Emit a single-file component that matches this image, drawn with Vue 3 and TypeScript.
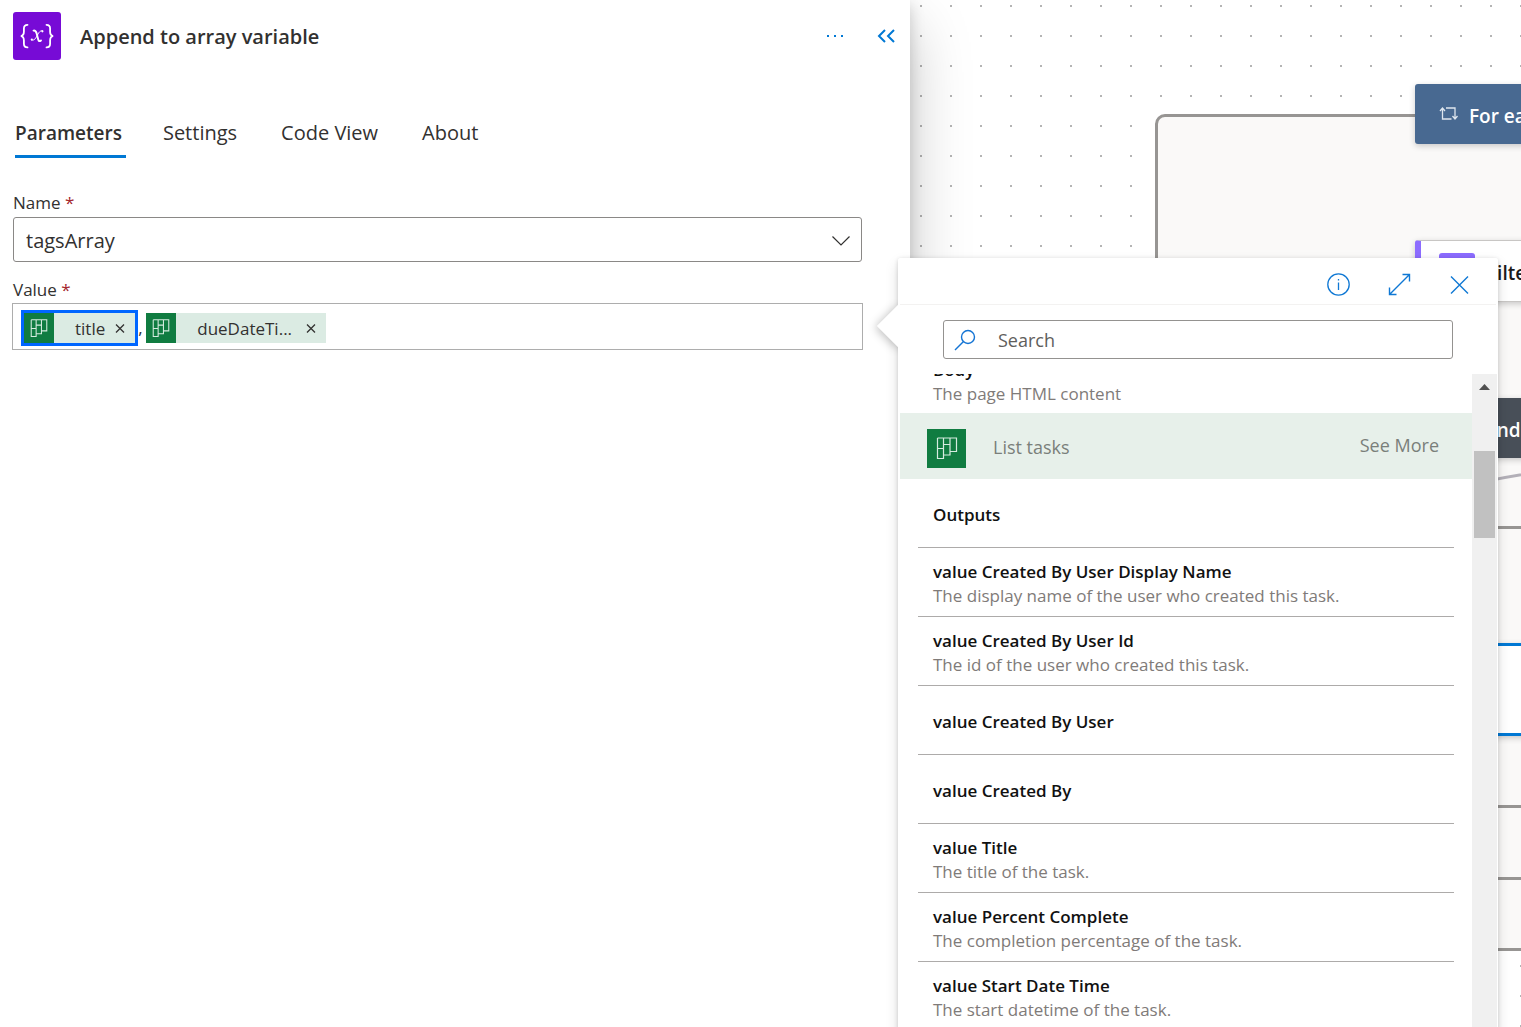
<script setup lang="ts">
import { ref } from 'vue'

interface OutputItem {
  title: string
  description?: string
}

const tabs: string[] = ['Parameters', 'Settings', 'Code View', 'About']
const activeTab = ref<string>('Parameters')
const variableName = ref<string>('tagsArray')
const query = ref<string>('')

const outputs: OutputItem[] = [
  { title: 'value Created By User Display Name', description: 'The display name of the user who created this task.' },
  { title: 'value Created By User Id', description: 'The id of the user who created this task.' },
  { title: 'value Created By User' },
  { title: 'value Created By' },
  { title: 'value Title', description: 'The title of the task.' },
  { title: 'value Percent Complete', description: 'The completion percentage of the task.' },
  { title: 'value Start Date Time', description: 'The start datetime of the task.' },
]
</script>

<template>
  <div class="designer">
    <section class="panel">
      <header class="panel-header">
        <svg class="variable-icon" viewBox="0 0 48 48" aria-hidden="true">
          <rect width="48" height="48" rx="3" fill="#770bd6" />
          <g fill="none" stroke="#fff" stroke-linecap="round">
            <path stroke-width="1.8" d="M14.5 12.8c-3 0-3.6 1.4-3.6 3.6v3.4c0 2.6-.7 3.900-3 4.300 2.300.4 3 1.700 3 4.300v3.400c0 2.200.6 3.600 3.600 3.600" />
            <path stroke-width="1.8" d="M33.5 12.8c3 0 3.6 1.4 3.6 3.6v3.4c0 2.6.7 3.900 3 4.300-2.300.4-3 1.700-3 4.300v3.400c0 2.200-.6 3.600-3.600 3.600" />
            <path stroke-width="1.9" d="M20.500 18.600c2.800-.6 3.100 2.400 3.900 5.800s1.200 6 3.600 4" />
            <path stroke-width="1" d="M29.600 18.900c-2.200-.8-3.600 1.300-5.200 4.200s-2.900 6-5.800 4.800" />
          </g>
          <circle cx="29.400" cy="19.300" r="1.100" fill="#fff" />
          <circle cx="18.800" cy="27.600" r="1.100" fill="#fff" />
        </svg>
        <h1 class="panel-title">Append to array variable</h1>
        <button class="icon-button" type="button" aria-label="More commands">
          <svg width="20" height="20" viewBox="0 0 20 20" fill="#0078d4">
            <rect x="3" y="9" width="2" height="2" /><rect x="10" y="9" width="2" height="2" /><rect x="17" y="9" width="2" height="2" />
          </svg>
        </button>
        <button class="icon-button" type="button" aria-label="Collapse panel">
          <svg width="20" height="20" viewBox="0 0 20 20" fill="none" stroke="#0078d4" stroke-width="2">
            <path d="M9 4L3 10l6 6M18 4l-6 6 6 6" />
          </svg>
        </button>
      </header>

      <nav class="tabs" role="tablist">
        <button
          v-for="tab in tabs"
          :key="tab"
          class="tab"
          :class="{ active: tab === activeTab }"
          type="button"
          role="tab"
          :aria-selected="tab === activeTab"
          @click="activeTab = tab"
        >{{ tab }}</button>
      </nav>

      <form class="fields" @submit.prevent>
        <label class="field-label" for="variable-name">Name <span class="required">*</span></label>
        <div class="select-wrap">
          <select id="variable-name" v-model="variableName" class="select">
            <option>tagsArray</option>
          </select>
          <svg class="chevron" width="20" height="12" viewBox="0 0 20 12" fill="none" stroke="#323130" stroke-width="1.200">
            <path d="M1.500 1.500L10 10l8.500-8.500" />
          </svg>
        </div>
        <span id="value-label" class="field-label">Value <span class="required">*</span></span>
        <div class="value-box" role="textbox" aria-labelledby="value-label" tabindex="0">
          <span class="token selected">
            <span class="token-icon">
              <svg width="18" height="18" viewBox="0 0 22 22" fill="none" stroke="#d5ebdf" stroke-width="1.300">
                <path d="M1.500 1h19v13.500H14M1.500 1v20.500h6V1M1.500 11.500h6M7.500 7.500H14M14 1v17H7.500" />
              </svg>
            </span>
            <span class="token-text">title</span>
            <button class="token-remove" type="button" aria-label="Remove title">
              <svg width="10" height="10" viewBox="0 0 10 10" stroke="#323130" stroke-width="1.300"><path d="M1 1.500l8 8M9 1.500l-8 8" /></svg>
            </button>
          </span>
          <span class="comma">,</span>
          <span class="token">
            <span class="token-icon">
              <svg width="18" height="18" viewBox="0 0 22 22" fill="none" stroke="#d5ebdf" stroke-width="1.300">
                <path d="M1.500 1h19v13.500H14M1.500 1v20.500h6V1M1.500 11.500h6M7.500 7.500H14M14 1v17H7.500" />
              </svg>
            </span>
            <span class="token-text">dueDateTi...</span>
            <button class="token-remove wide" type="button" aria-label="Remove dueDateTime">
              <svg width="10" height="10" viewBox="0 0 10 10" stroke="#323130" stroke-width="1.300"><path d="M1 1.500l8 8M9 1.500l-8 8" /></svg>
            </button>
          </span>
        </div>
      </form>
    </section>

    <main class="canvas">
      <div class="group outer"></div>
      <div class="group inner-a"></div>
      <div class="group inner-b"></div>
      <svg class="edge" width="120" height="30" viewBox="0 0 120 30" fill="none" stroke="#b3b0b8" stroke-width="3">
        <path d="M0 29C30 20 60 13 120 5" />
      </svg>
      <div class="node for-each">
        <svg width="20" height="16" viewBox="0 0 20 16" fill="none" stroke="#dfe6ee" stroke-width="1.300">
          <path d="M1 5l2.500-3L6 5M3.500 2.500v10.500h9M7 2h9v10.500M13.500 10l2.500 3 2.500-3" />
        </svg>
        <span>For each</span>
      </div>
      <div class="node filter">
        <span class="filter-icon"></span>
        <span>Filter array</span>
      </div>
      <div class="node condition"><span>Condition</span></div>
      <div class="node selected-card"></div>
    </main>

    <aside class="picker">
      <div class="beak"></div>
      <div class="picker-body">
        <header class="picker-header">
          <button class="icon-button" type="button" aria-label="Information">
            <svg width="24" height="24" viewBox="0 0 24 24" fill="none" stroke="#0f78d4" stroke-width="1.300">
              <circle cx="11.500" cy="11.500" r="10.700" /><path d="M11.500 9.500V17M11.500 6v1.600" />
            </svg>
          </button>
          <button class="icon-button" type="button" aria-label="Expand">
            <svg width="24" height="24" viewBox="0 0 24 24" fill="none" stroke="#0f78d4" stroke-width="1.400">
              <path d="M2.500 21.500l20-20M15.500 1.500h7v7M2.500 14.500v7h7" />
            </svg>
          </button>
          <button class="icon-button" type="button" aria-label="Close">
            <svg width="24" height="24" viewBox="0 0 24 24" fill="none" stroke="#0f78d4" stroke-width="1.400">
              <path d="M4 3.500l17 17M21 3.500l-17 17" />
            </svg>
          </button>
        </header>

        <label class="search">
          <svg width="22" height="22" viewBox="0 0 22 22" fill="none" stroke="#1474d4" stroke-width="1.400">
            <circle cx="14" cy="8" r="6.500" /><path d="M9.500 12.500L1 21" />
          </svg>
          <input v-model="query" class="search-input" type="text" placeholder="Search" aria-label="Search" />
        </label>

        <div class="results">
          <div class="list">
            <div class="item previous">
              <div class="item-title">Body</div>
              <div class="item-description">The page HTML content</div>
            </div>
            <div class="connector">
              <span class="connector-icon">
                <svg width="22" height="22" viewBox="0 0 22 22" fill="none" stroke="#d5ebdf" stroke-width="1.200">
                  <path d="M1.500 1h19v13.500H14M1.500 1v20.500h6V1M1.500 11.500h6M7.500 7.500H14M14 1v17H7.500" />
                </svg>
              </span>
              <span class="connector-name">List tasks</span>
              <button class="see-more" type="button">See More</button>
            </div>
            <h2 class="item item-title">Outputs</h2>
            <div v-for="item in outputs" :key="item.title" class="item">
              <div class="item-title">{{ item.title }}</div>
              <div v-if="item.description" class="item-description">{{ item.description }}</div>
            </div>
          </div>
          <div class="scrollbar">
            <svg class="scroll-up" width="11" height="6" viewBox="0 0 11 6" fill="#505050"><path d="M0 6L5.500 0 11 6z" /></svg>
            <div class="thumb"></div>
          </div>
        </div>
      </div>
    </aside>
  </div>
</template>

<style>
body {
  margin: 0;
}
</style>

<style scoped>
* {
  box-sizing: border-box;
}

.designer {
  position: relative;
  display: grid;
  grid-template-columns: 910px minmax(0, 1fr);
  height: 100vh;
  overflow: hidden;
  background: #fff;
  color: #323130;
  font-family: 'Open Sans', 'Noto Sans', sans-serif;
  font-size: 20px;
}

button {
  padding: 0;
  border: 0;
  background: none;
  color: inherit;
  font: inherit;
  cursor: pointer;
}

svg {
  display: block;
}

.panel {
  position: relative;
  z-index: 1;
  background: #fff;
  box-shadow: 0 26px 58px rgba(0, 0, 0, 0.22), 0 5px 14px rgba(0, 0, 0, 0.18);
}

.panel-header {
  display: flex;
  align-items: center;
  gap: 32px;
  padding: 12px 14px 0 13px;
}

.variable-icon {
  width: 48px;
  height: 48px;
}

.panel-title {
  flex: 1;
  margin: 2px 0 0 -13px;
  font-size: 20px;
  line-height: 26px;
  font-weight: 600;
}

.tabs {
  display: flex;
  gap: 37px;
  margin-top: 60px;
  padding-left: 15px;
}

.tab {
  padding: 0 7px 9px 0;
  border-bottom: 3px solid transparent;
  line-height: 26px;
}

.tab.active {
  padding-right: 4px;
  border-color: #0078d4;
  font-size: 19px;
  font-weight: 600;
}

.fields {
  padding: 33px 47px 0 12px;
}

.field-label {
  display: block;
  padding-left: 1px;
  font-size: 17px;
  line-height: 24px;
}

.required {
  color: #a4262c;
}

.select-wrap {
  position: relative;
  margin: 2px 1px 16px;
}

.select {
  width: 100%;
  height: 45px;
  padding: 2px 12px 0;
  border: 1px solid #8a8886;
  border-radius: 3px;
  appearance: none;
  background: #fff;
  color: #323130;
  font: inherit;
}

.chevron {
  position: absolute;
  top: 18px;
  right: 11px;
  pointer-events: none;
}

.value-box {
  display: flex;
  align-items: center;
  height: 47px;
  margin-top: 1px;
  padding: 2px 8px 0;
  border: 1px solid #adadad;
  font-size: 17px;
}

.token {
  display: flex;
  align-items: center;
  height: 30px;
  padding-right: 10px;
  background: #dbebe3;
}

.token.selected {
  outline: 3px solid #0066ff;
  margin-left: 3px;
}

.token-icon {
  display: grid;
  place-items: center;
  width: 30px;
  height: 30px;
  background: #107c41;
}

.token-text {
  padding: 1px 10px 0 21px;
}

.token-remove.wide {
  margin-left: 4px;
}

.comma {
  width: 11px;
  padding-left: 3px;
}

.canvas {
  position: relative;
  overflow: hidden;
  background: #fff radial-gradient(circle at 11px 6px, #b4b4b4 1px, transparent 1px) 0 0 / 30px 30px;
}

.group {
  position: absolute;
  right: -300px;
  border: 3px solid #979593;
  border-radius: 10px;
  background: #faf9f8;
}

.outer {
  left: 245px;
  top: 114px;
  height: 837px;
}

.inner-a {
  left: 400px;
  top: 526px;
  height: 354px;
}

.inner-b {
  left: 430px;
  top: 805px;
  height: 75px;
}

.edge {
  position: absolute;
  left: 530px;
  top: 464px;
}

.node {
  position: absolute;
  left: 505px;
  display: flex;
  align-items: center;
  width: 320px;
  height: 60px;
  border-radius: 3px;
  box-shadow: 0 2px 6px rgba(0, 0, 0, 0.2);
  font-size: 19px;
  font-weight: 600;
  white-space: nowrap;
}

.for-each {
  top: 84px;
  gap: 10px;
  padding: 3px 0 0 24px;
  background: #486991;
  color: #fff;
}

.for-each svg {
  margin-bottom: 3px;
}

.filter {
  top: 240px;
  height: 62px;
  gap: 12px;
  padding: 3px 0 0 18px;
  border: 1px solid #c8c6c4;
  border-left: 6px solid #8c6cff;
  background: #fff;
  color: #1b1a19;
}

.filter-icon {
  width: 36px;
  height: 36px;
  margin-bottom: 3px;
  border-radius: 3px;
  background: #8c6cff;
}

.condition {
  top: 398px;
  padding: 3px 0 0 58px;
  background: #484f58;
  color: #fff;
}

.selected-card {
  top: 643px;
  height: 93px;
  border: 3px solid #0078d4;
  background: #fff;
}

.picker {
  position: absolute;
  z-index: 2;
  left: 898px;
  top: 258px;
  bottom: 0;
  width: 600px;
}

.beak {
  position: absolute;
  left: -15px;
  top: 53px;
  width: 30px;
  height: 30px;
  background: #fff;
  box-shadow: 0 2px 10px rgba(0, 0, 0, 0.26);
  transform: rotate(45deg);
}

.picker-body {
  position: relative;
  display: flex;
  flex-direction: column;
  height: calc(100% + 20px);
  border-radius: 3px;
  background: #fff;
}

.picker::before {
  content: '';
  position: absolute;
  inset: 0 0 -20px;
  border-radius: 3px;
  box-shadow: 0 6px 14px rgba(0, 0, 0, 0.13), 0 1px 4px rgba(0, 0, 0, 0.16);
}

.picker-header {
  display: flex;
  justify-content: flex-end;
  gap: 36px;
  margin: 0 2px;
  padding: 15px 25px 7px;
  border-bottom: 1px solid #f3f2f1;
}

.search {
  display: flex;
  align-items: center;
  gap: 20px;
  height: 39px;
  margin: 15px 45px;
  padding: 0 10px;
  border: 1px solid #949290;
  border-radius: 3px;
}

.search-input {
  flex: 1;
  min-width: 0;
  border: 0;
  outline: 0;
  background: none;
  color: #323130;
  font: inherit;
  font-size: 18px;
}

.search-input::placeholder {
  color: #605e5c;
  opacity: 1;
}

.results {
  display: flex;
  flex: 1;
  min-height: 0;
  margin: 0 1px 0 2px;
  overflow: hidden;
}

.list {
  flex: 1;
  margin-top: -30px;
}

.item {
  display: flex;
  flex-direction: column;
  justify-content: center;
  height: 69px;
  margin: 0 18px;
  padding: 12px 15px 8px;
  border-bottom: 1px solid #adabaa;
  font-size: 17px;
  line-height: 24px;
}

.previous {
  padding: 14px 15px 6px;
  border-color: transparent;
}

.item-title {
  color: #111;
  font-size: 17px;
  font-weight: 600;
}

.item-description {
  color: #7f7b79;
}

.connector {
  display: flex;
  align-items: center;
  height: 66px;
  padding: 0 33px 0 27px;
  background: #e7f0ea;
  color: #7a7f7a;
  font-size: 18px;
}

.connector-icon {
  display: grid;
  place-items: center;
  width: 39px;
  height: 39px;
  margin: 4px 27px 0 0;
  background: #107c41;
}

.connector-name {
  flex: 1;
  padding-top: 1px;
}

.see-more {
  padding-bottom: 2px;
}

.scrollbar {
  width: 25px;
  padding: 10px 2px 0;
  background: #f0f0f0;
}

.scroll-up {
  margin: 0 auto 61px;
}

.thumb {
  height: 87px;
  background: #c1c1c1;
}
</style>
